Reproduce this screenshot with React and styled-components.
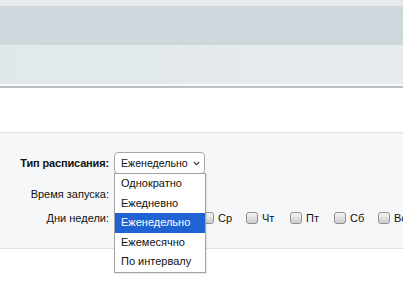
import styled, { createGlobalStyle } from "styled-components";

const GlobalStyle = createGlobalStyle`
  html, body {
    margin: 0;
    padding: 0;
    background: #ffffff;
    font-family: "Liberation Sans", Arial, sans-serif;
    font-size: 11px;
    color: #222;
  }
`;

const days = ["Пн", "Вт", "Ср", "Чт", "Пт", "Сб", "Вс"];
const options = ["Однократно", "Ежедневно", "Еженедельно", "Ежемесячно", "По интервалу"];

const Page = styled.div`
  min-height: 294px;
  position: relative;
`;

const Header = styled.header`
  display: flex;
  flex-direction: column;
`;

const TopStrip = styled.div`
  height: 6px;
  background: #e5ebed;
`;

const DarkBand = styled.div`
  height: 39px;
  background-color: #cdd6da;
  background-image: radial-gradient(rgba(255, 255, 255, 0.18) 0.6px, transparent 0.8px);
  background-size: 3px 3px;
`;

const LightBand = styled.div`
  height: 39px;
  background: linear-gradient(90deg, #e1e8ea, #e6ecee);
  border-bottom: 2px solid #f6f8f9;
  box-shadow: 0 2px 0 #b8c1c5;
`;

const Gap = styled.div`
  height: 46px;
`;

const Panel = styled.section`
  position: relative;
  z-index: 1;
  background: #f5f7f8;
  border-top: 1px solid #dce2e5;
  border-bottom: 1px solid #dce2e5;
  padding: 19px 0 22px;
  display: flex;
  flex-direction: column;
`;

const Row = styled.div`
  display: grid;
  grid-template-columns: 114px 1fr;
  align-items: center;
  height: ${(p) => p.$h}px;
  margin-top: ${(p) => p.$top || 0}px;
  position: relative;
  z-index: ${(p) => p.$z || 0};
`;

const Label = styled.div`
  text-align: right;
  padding-right: 5px;
  font-weight: ${(p) => (p.$bold ? "bold" : "normal")};
  letter-spacing: ${(p) => (p.$bold ? "-0.15px" : "0")};
  color: #111;
  line-height: 16px;
`;

const Field = styled.div`
  position: relative;
  display: flex;
  align-items: center;
  min-height: 16px;
`;

const Select = styled.div`
  width: 91px;
  height: 22px;
  box-sizing: border-box;
  border: 1px solid #a6a6a6;
  border-radius: 4px;
  background: #fff;
  display: flex;
  align-items: center;
  justify-content: space-between;
  padding: 0 4px 0 6px;
  font-size: 10.6px;
  color: #111;
`;

const Dropdown = styled.ul`
  position: absolute;
  left: 0;
  top: 21px;
  width: 92px;
  margin: 0;
  padding: 0;
  list-style: none;
  background: #fff;
  border: 1px solid #a3a3a3;
  box-sizing: border-box;
  box-shadow: 1px 1px 1px rgba(0, 0, 0, 0.08);
`;

const Option = styled.li`
  height: 19.5px;
  line-height: 19.5px;
  padding-left: 6px;
  font-size: 11px;
  color: ${(p) => (p.$active ? "#fff" : "#111")};
  background: ${(p) => (p.$active ? "#1f62d4" : "transparent")};
`;

const Days = styled.div`
  display: flex;
`;

const Day = styled.label`
  display: flex;
  align-items: center;
  width: 44px;
  gap: 4px;
  color: #111;
`;

const Box = styled.span`
  width: 12px;
  height: 12px;
  box-sizing: border-box;
  border: 1px solid #8e8e8e;
  border-radius: 3px;
  background: linear-gradient(#f6f6f6, #cdcdcd);
`;

const Chevron = () => (
  <svg width="7" height="5" viewBox="0 0 7 5">
    <path d="M0.8 1 L3.5 3.8 L6.2 1" fill="none" stroke="#333" strokeWidth="1.1" />
  </svg>
);

export default function App() {
  return (
    <Page>
      <GlobalStyle />
      <Header>
        <TopStrip />
        <DarkBand />
        <LightBand />
      </Header>
      <Gap />
      <Panel>
        <Row $h={22} $z={2}>
          <Label $bold>Тип расписания:</Label>
          <Field>
            <Select>
              <span>Еженедельно</span>
              <Chevron />
            </Select>
            <Dropdown>
              {options.map((o) => (
                <Option key={o} $active={o === "Еженедельно"}>
                  {o}
                </Option>
              ))}
            </Dropdown>
          </Field>
        </Row>
        <Row $h={16} $top={12}>
          <Label>Время запуска:</Label>
          <Field />
        </Row>
        <Row $h={16} $top={8}>
          <Label>Дни недели:</Label>
          <Field>
            <Days>
              {days.map((d) => (
                <Day key={d}>
                  <Box />
                  {d}
                </Day>
              ))}
            </Days>
          </Field>
        </Row>
      </Panel>
    </Page>
  );
}
